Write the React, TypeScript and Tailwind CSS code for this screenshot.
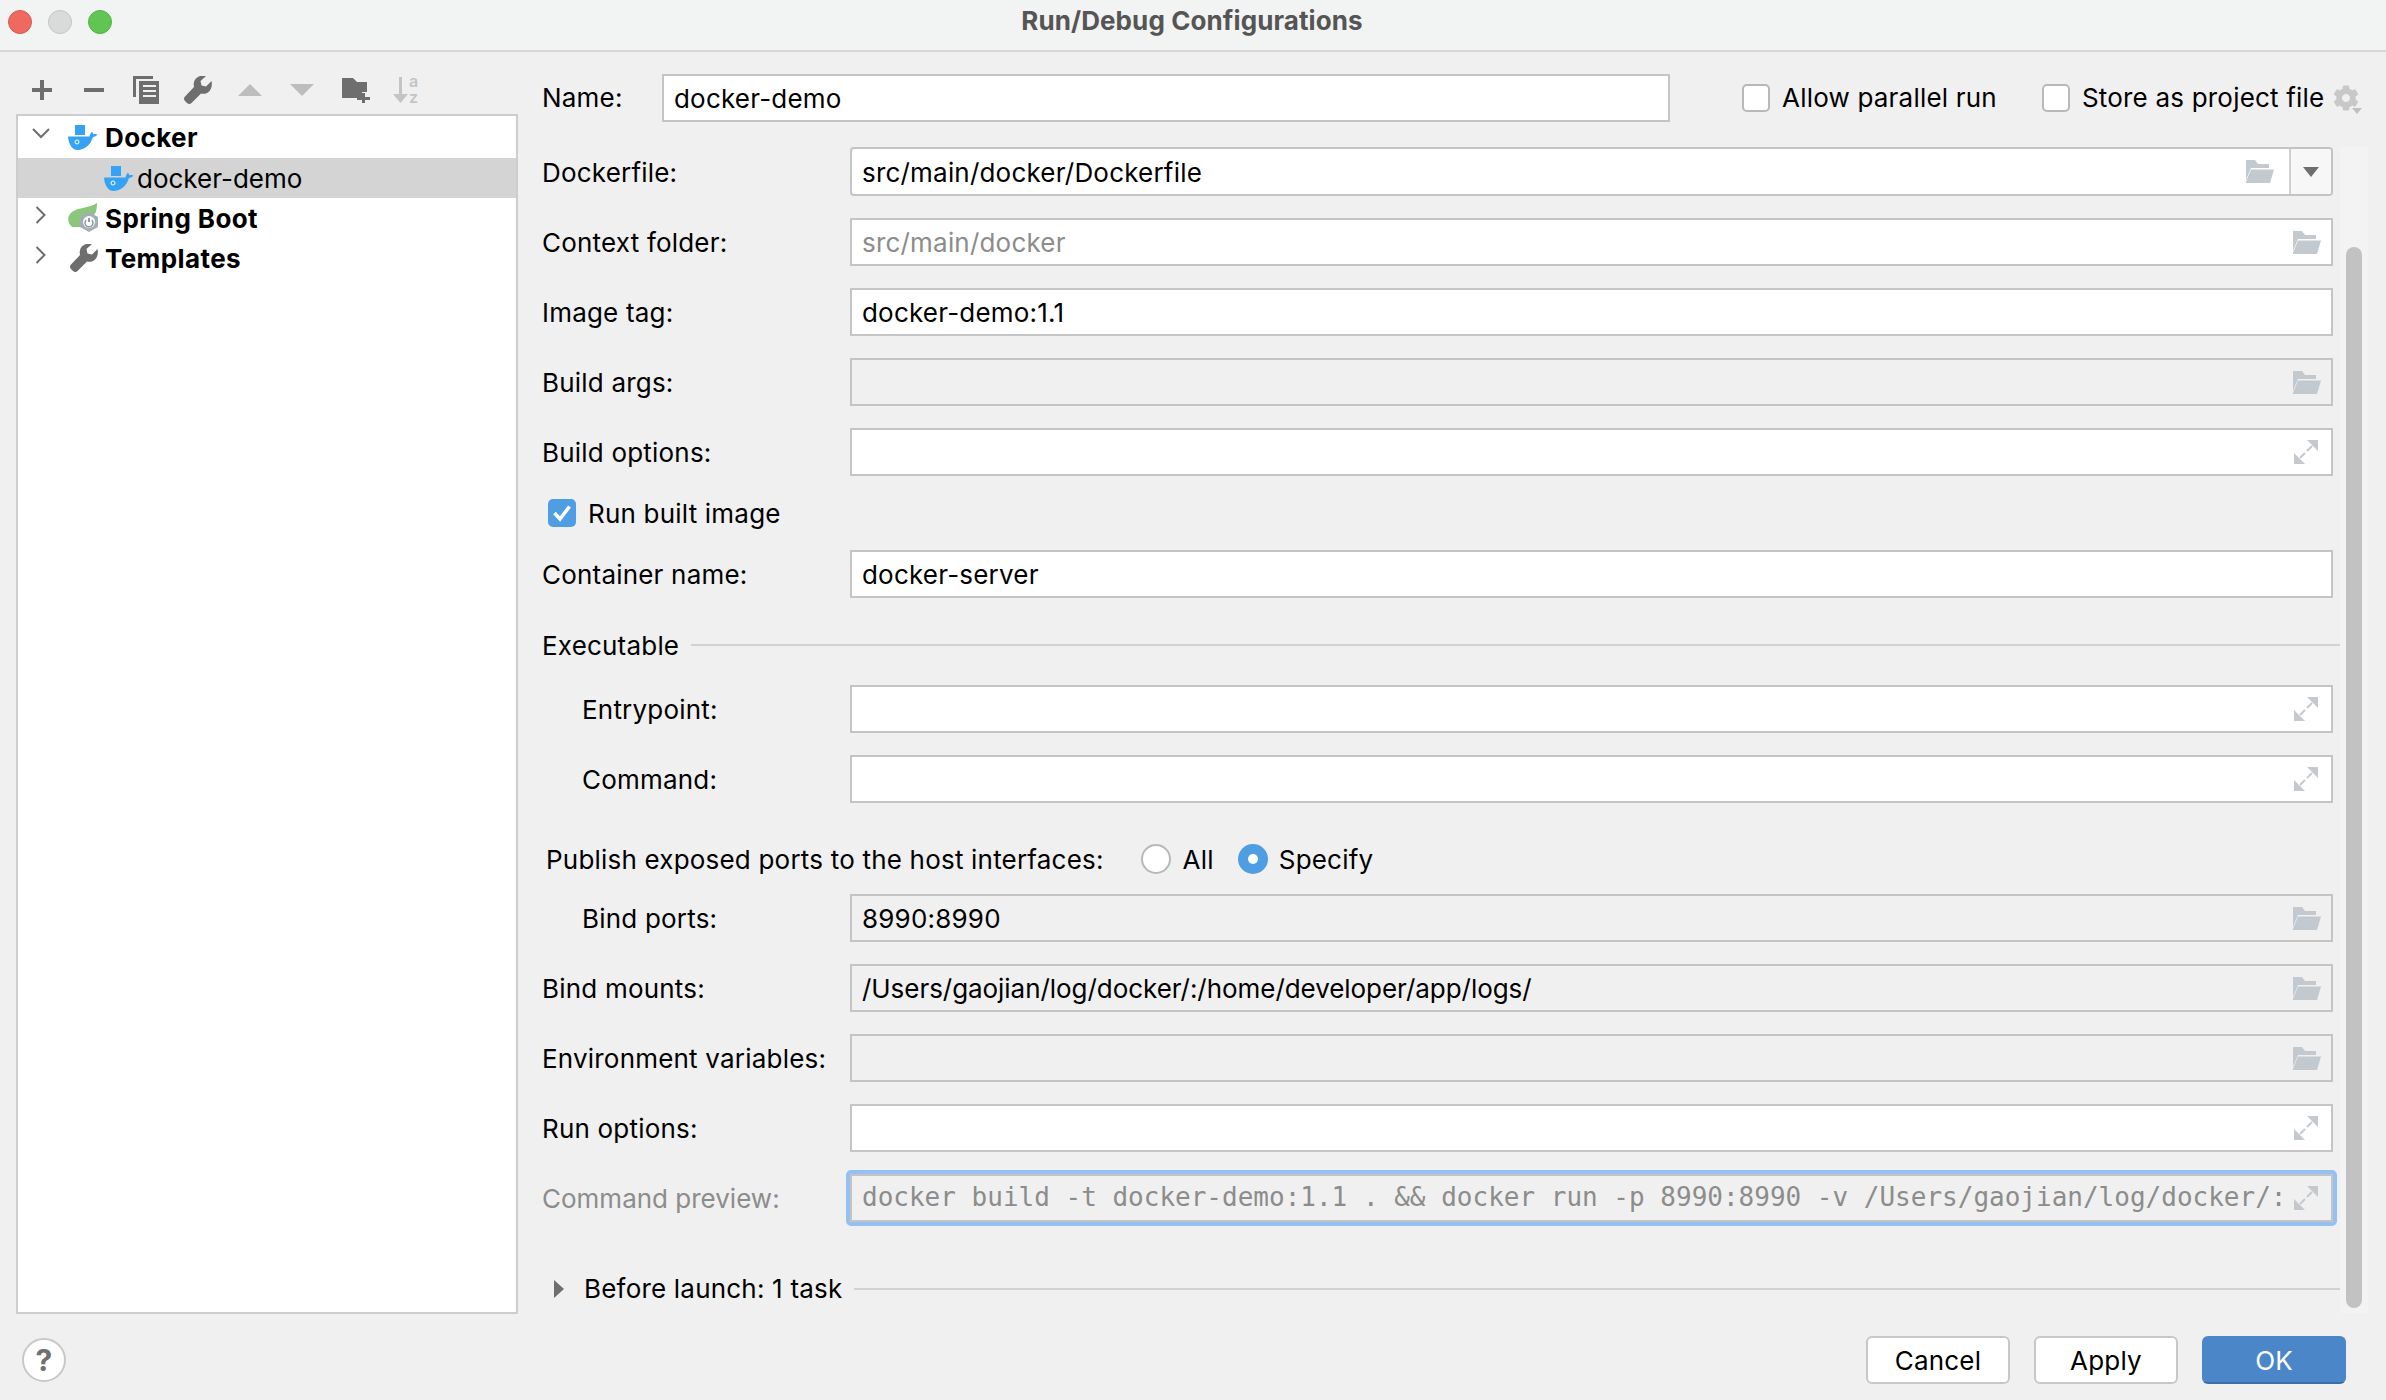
import React from "react";
import { FaCog } from "react-icons/fa";

const Wrench = () => (
  <svg width="28" height="28" viewBox="0 0 28 28" className="shrink-0">
    <path d="M27.500 5l-5.500 5.500-4.500-1-1-4.500L22 0c-4-1-8 0-10.500 3C9.500 5.500 9.500 8.500 10 11L1 20.500c-1.300 1.300-1.300 3 0 4.500l2 2c1.500 1.300 3.200 1.300 4.500 0L17 17.500c3 .8 6 0 8.300-2.300C27.500 13 28.500 8.500 27.500 5z" fill="#6e6e6e" />
  </svg>
);

const Folder = ({ className = "" }: { className?: string }) => (
  <svg width="30" height="23" viewBox="0 0 30 23" className={className}>
    <path d="M2 0h9l3 4h11v4H7L2 20z" fill="#c2c9cf" />
    <path d="M7 9.500h23L26 23H1.500z" fill="#c2c9cf" />
  </svg>
);

const Expand = () => (
  <svg width="24" height="24" viewBox="0 0 24 24" fill="none">
    <path d="M13 0h11v11z" fill="#c4c9cd" />
    <path d="M18 6l-5 5" stroke="#c4c9cd" strokeWidth="2" />
    <path d="M0 24V13l11 11z" fill="#c4c9cd" />
    <path d="M6 18l5-5" stroke="#c4c9cd" strokeWidth="2" />
  </svg>
);

const Whale = () => (
  <svg width="30" height="25" viewBox="0 0 30 25" className="shrink-0">
    <rect x="7" y="0" width="10" height="10" fill="#35a2f6" />
    <path d="M0 11.500h21.500c.5-2 1.200-3.500 2.500-5 .7 1 1.100 2 1.200 2.800 1.500-.6 3-.5 4.300.2-1.200 1.500-2.700 2.300-4.500 2.500C22.500 20 16.500 25 9.500 25 4 25 .5 19 0 11.500z" fill="#35a2f6" />
    <circle cx="9" cy="17" r="2" fill="none" stroke="#fff" strokeWidth="1" />
  </svg>
);

const SpringIcon = () => (
  <svg width="32" height="30" viewBox="0 0 32 30" className="shrink-0">
    <path d="M29 0c0 4-.5 10-3 12H18l-6 6v6H4C0 21-1 15 2 11 7 4 20 6 29 0z" fill="#8cc67c" />
    <path d="M21 9l9 5v10l-9 5-9-5V14z" fill="#a2adb5" />
    <circle cx="21" cy="19" r="6" fill="#fff" />
    <path d="M21 15v4" stroke="#8c98a0" strokeWidth="2" />
    <path d="M18.200 17a4 4 0 1 0 5.600 0" fill="none" stroke="#8c98a0" strokeWidth="1.500" />
  </svg>
);

const Chevron = ({ open }: { open?: boolean }) => (
  <div className="w-[46px] mr-[4px] flex justify-center shrink-0 -translate-y-[3px]">
    {open ? (
      <svg width="18" height="12" viewBox="0 0 18 12" fill="none"><path d="M1 1l8 8 8-8" stroke="#6e6e6e" strokeWidth="2" /></svg>
    ) : (
      <svg width="12" height="18" viewBox="0 0 12 18" fill="none"><path d="M1.500 1l8 8-8 8" stroke="#6e6e6e" strokeWidth="2" /></svg>
    )}
  </div>
);

const ToolIcon = ({ children }: { children: React.ReactNode }) => (
  <div className="w-[52px] h-[36px] flex items-center justify-center shrink-0">{children}</div>
);

const Toolbar = () => (
  <div className="flex items-center h-[36px] mt-[20px] pl-[16px] mb-[6px]">
    <ToolIcon>
      <svg width="22" height="22" viewBox="0 0 22 22"><path d="M9 1h4v8h8v4h-8v8H9v-8H1V9h8z" fill="#6e6e6e" /></svg>
    </ToolIcon>
    <ToolIcon>
      <svg width="22" height="6" viewBox="0 0 22 6"><rect x="1" y="1" width="20" height="4" fill="#6e6e6e" /></svg>
    </ToolIcon>
    <ToolIcon>
      <svg width="26" height="28" viewBox="0 0 26 28">
        <path d="M0 0h20v3H3v18H0z" fill="#6e6e6e" />
        <path d="M6 5h20v23H6z" fill="#6e6e6e" />
        <path d="M10 10h13M10 15h13M10 20h13" stroke="#f0f0f0" strokeWidth="2" />
      </svg>
    </ToolIcon>
    <ToolIcon><Wrench /></ToolIcon>
    <ToolIcon>
      <svg width="24" height="12" viewBox="0 0 24 12"><path d="M12 0l12 12H0z" fill="#bdbdbd" /></svg>
    </ToolIcon>
    <ToolIcon>
      <svg width="24" height="12" viewBox="0 0 24 12"><path d="M0 0h24L12 12z" fill="#bdbdbd" /></svg>
    </ToolIcon>
    <ToolIcon>
      <svg width="29" height="25" viewBox="0 0 29 25" className="translate-x-[2px]">
        <path d="M0 0h11l4 4h10v10h-5v6H0z" fill="#6e6e6e" />
        <path d="M20 15h3v4h5v3h-5v3h-3v-3h-5v-3h5z" fill="#6e6e6e" />
      </svg>
    </ToolIcon>
    <ToolIcon>
      <svg width="28" height="28" viewBox="0 0 28 28" className="overflow-visible">
        <path d="M7 1h3v17h6l-7.500 9L1 18h6z" fill="#c4c4c4" />
        <text x="17" y="11" fontSize="16" fontFamily="Inter, sans-serif" fontWeight="600" fill="#c4c4c4">a</text>
        <text x="17" y="27" fontSize="16" fontFamily="Inter, sans-serif" fontWeight="600" fill="#c4c4c4">z</text>
      </svg>
    </ToolIcon>
  </div>
);

const Tree = () => (
  <div className="w-[502px] flex-1 ml-[16px] bg-white border-2 border-[#cdcdcd] text-black tracking-normal">
    <div className="flex items-center h-[42px]">
      <Chevron open />
      <Whale />
      <span className="ml-[7px] pt-[2px] font-bold tracking-[0.4px]">Docker</span>
    </div>
    <div className="flex items-center h-[40px] bg-[#d4d4d4] pl-[86px]">
      <Whale />
      <span className="ml-[3px] pt-[2px]">docker-demo</span>
    </div>
    <div className="flex items-center h-[40px]">
      <Chevron />
      <SpringIcon />
      <span className="ml-[5px] pt-[2px] font-bold tracking-[0.4px]">Spring Boot</span>
    </div>
    <div className="flex items-center h-[40px]">
      <Chevron />
      <div className="w-[32px] shrink-0 flex justify-center"><Wrench /></div>
      <span className="ml-[5px] pt-[2px] font-bold tracking-[0.4px]">Templates</span>
    </div>
  </div>
);

const Field = ({
  value = "",
  icon,
  disabled,
  muted,
  combo,
  tight,
}: {
  value?: React.ReactNode;
  icon?: "folder" | "expand";
  disabled?: boolean;
  muted?: boolean;
  combo?: boolean;
  tight?: boolean;
}) => (
  <div className={`flex-1 min-w-0 h-[48px] flex items-center border-2 border-[#c4c4c4] ${disabled ? "bg-[#f0f0f0]" : "bg-white"} ${combo ? "h-[49px] rounded-[4px]" : ""}`}>
    <span className={`flex-1 min-w-0 pl-[10px] pt-[2px] whitespace-nowrap overflow-hidden ${tight ? "tracking-[-0.05px]" : ""} ${muted ? "text-[#8c8c8c]" : "text-black"}`}>{value}</span>
    {icon === "folder" && <Folder className={`${combo ? "mr-[15px]" : "mr-[10px]"} shrink-0`} />}
    {icon === "expand" && <div className="mr-[13px] shrink-0 flex"><Expand /></div>}
    {combo && (
      <div className="w-[42px] h-full border-l-2 border-[#d0d0d0] bg-[#f7f7f7] rounded-r-[3px] flex items-center justify-center">
        <svg width="16" height="10" viewBox="0 0 16 10"><path d="M0 0h16L8 10z" fill="#6e6e6e" /></svg>
      </div>
    )}
  </div>
);

const Row = ({
  label,
  indent,
  muted,
  children,
  mt = "mt-[22px]",
}: {
  label: string;
  indent?: boolean;
  muted?: boolean;
  children: React.ReactNode;
  mt?: string;
}) => (
  <div className={`flex items-center ${mt}`}>
    <div className={`w-[308px] shrink-0 pt-[2px] ${indent ? "pl-[40px]" : ""} ${muted ? "text-[#8c8c8c] tracking-normal" : "text-black"}`}>{label}</div>
    {children}
  </div>
);

const Check = ({ label, className = "" }: { label: string; className?: string }) => (
  <div className={`flex items-center ${className}`}>
    <div className="w-[28px] h-[28px] rounded-[5px] border-2 border-[#b8b8b8] bg-white mr-[12px]" />
    <span>{label}</span>
  </div>
);

const Form = () => (
  <div className="flex-1 min-w-0 relative pl-[24px] text-black">
    <div className="flex items-center h-[48px] mt-[22px]">
      <div className="w-[120px] shrink-0">Name:</div>
      <div className="w-[1008px] h-[48px] flex items-center border-2 border-[#c4c4c4] bg-white pl-[10px] pt-[1px]">docker-demo</div>
      <Check label="Allow parallel run" className="ml-[72px]" />
      <Check label="Store as project file" className="ml-[45px]" />
      <div className="relative ml-[8px] w-[28px] h-[28px] flex items-center justify-center">
        <FaCog size={26} color="#c8c8c8" />
        <svg width="10" height="6" viewBox="0 0 10 6" className="absolute right-[-2px] bottom-[-2px]"><path d="M0 0h10L5 6z" fill="#c0c0c0" /></svg>
      </div>
    </div>
    <div className="w-[1791px]">
      <Row label="Dockerfile:" mt="mt-[25px]"><Field value="src/main/docker/Dockerfile" icon="folder" combo /></Row>
      <Row label="Context folder:" mt="mt-[22px]"><Field value="src/main/docker" icon="folder" muted /></Row>
      <Row label="Image tag:"><Field value="docker-demo:1.1" /></Row>
      <Row label="Build args:"><Field icon="folder" disabled /></Row>
      <Row label="Build options:"><Field icon="expand" /></Row>
      <div className="flex items-center h-[30px] mt-[22px] pl-[6px]">
        <div className="w-[28px] h-[28px] rounded-[5px] bg-[#4f9ee3] flex items-center justify-center mr-[12px]">
          <svg width="20" height="18" viewBox="0 0 20 18" fill="none"><path d="M2.500 9l5.500 6L17.500 2.500" stroke="#fff" strokeWidth="3.500" /></svg>
        </div>
        <span className="pt-[1px]">Run built image</span>
      </div>
      <Row label="Container name:" mt="mt-[22px]"><Field value="docker-server" /></Row>
      <div className="flex items-center h-[30px] mt-[32px] w-[1800px]">
        <span className="pt-[2px]">Executable</span>
        <div className="flex-1 h-[2px] bg-[#d2d2d2] ml-[12px]" />
      </div>
      <Row label="Entrypoint:" indent mt="mt-[25px]"><Field icon="expand" /></Row>
      <Row label="Command:" indent><Field icon="expand" /></Row>
      <div className="flex items-center h-[30px] mt-[41px] pl-[4px]">
        <span className="pt-[2px]">Publish exposed ports to the host interfaces:</span>
        <div className="w-[30px] h-[30px] rounded-full border-2 border-[#b8b8b8] bg-white ml-[37px] mr-[12px]" />
        <span className="pt-[2px]">All</span>
        <div className="w-[30px] h-[30px] rounded-full bg-[#4f9ee3] flex items-center justify-center ml-[24px] mr-[11px]">
          <div className="w-[10px] h-[10px] rounded-full bg-white" />
        </div>
        <span className="pt-[2px]">Specify</span>
      </div>
      <Row label="Bind ports:" indent mt="mt-[20px]"><Field value="8990:8990" icon="folder" disabled /></Row>
      <Row label="Bind mounts:"><Field value="/Users/gaojian/log/docker/:/home/developer/app/logs/" icon="folder" disabled tight /></Row>
      <Row label="Environment variables:"><Field icon="folder" disabled /></Row>
      <Row label="Run options:"><Field icon="expand" /></Row>
      <Row label="Command preview:" muted mt="mt-[22px]">
        <div className="flex-1 min-w-0 h-[48px] flex items-center border-2 border-[#c4c4c4] bg-[#f0f0f0] rounded-[1px] outline-[4px] outline-[#94c1f1]">
          <span className="flex-1 min-w-0 pl-[10px] pb-[2px] whitespace-nowrap overflow-hidden text-[#8c8c8c] text-[26px] tracking-normal font-['DejaVu_Sans_Mono',monospace]">
            {"docker build -t docker-demo:1.1 . && docker run -p 8990:8990 -v /Users/gaojian/log/docker/:"}
          </span>
          <div className="mr-[13px] shrink-0 flex"><Expand /></div>
        </div>
      </Row>
      <div className="flex items-center h-[30px] mt-[52px] pl-[12px] w-[1800px]">
        <svg width="10" height="18" viewBox="0 0 10 18"><path d="M0 0l10 9-10 9z" fill="#6e6e6e" /></svg>
        <span className="ml-[20px]">Before launch: 1 task</span>
        <div className="flex-1 h-[2px] bg-[#d2d2d2] ml-[12px]" />
      </div>
    </div>
    <div className="absolute left-[1822px] top-[95px] bottom-[1px] w-[28px] bg-[#f3f3f3]">
      <div className="absolute left-[6px] top-[100px] bottom-[5px] w-[16px] rounded-full bg-[#c2c2c2]" />
    </div>
  </div>
);

const Btn = ({ label, primary }: { label: string; primary?: boolean }) => (
  <div className={`w-[144px] h-[48px] rounded-[6px] flex items-center justify-center border-2 pt-[1px] ${primary ? "bg-[#4b87c8] border-[#4b87c8] border-b-[#3c6fa8] text-white" : "bg-white border-[#c8c8c8] text-black"}`}>
    {label}
  </div>
);

export default function App() {
  return (
    <div className="w-[2386px] h-[1400px] flex flex-col bg-[#f0f0f0] overflow-hidden text-[26px] leading-[32px] tracking-[0.2px] font-['Inter','Liberation_Sans',sans-serif]">
      <div className="relative h-[52px] shrink-0 flex items-center bg-[#f2f3f3] border-b-2 border-[#d8d8d8] pl-[8px] pb-[6px] gap-[16px]">
        <div className="w-[24px] h-[24px] rounded-full bg-[#ee6a5f] border border-[#d65a50]" />
        <div className="w-[24px] h-[24px] rounded-full bg-[#d9dbda] border border-[#c4c6c5]" />
        <div className="w-[24px] h-[24px] rounded-full bg-[#61c554] border border-[#52b045]" />
        <div className="absolute inset-x-0 top-0 h-[42px] flex items-center justify-center pr-[2px] text-[#555555] font-bold text-[26px] tracking-[0.1px]">Run/Debug Configurations</div>
      </div>
      <div className="flex h-[1262px] shrink-0">
        <div className="w-[518px] shrink-0 flex flex-col"><Toolbar /><Tree /></div>
        <Form />
      </div>
      <div className="flex-1 flex items-start relative pt-[22px]">
        <div className="ml-[22px] mt-[2px] w-[44px] h-[44px] rounded-full bg-white border-2 border-[#c8c8c8] flex items-center justify-center text-[#707070] font-bold text-[30px]">?</div>
        <div className="ml-auto mr-[40px] flex gap-[24px]">
          <Btn label="Cancel" />
          <Btn label="Apply" />
          <Btn label="OK" primary />
        </div>
      </div>
    </div>
  );
}
